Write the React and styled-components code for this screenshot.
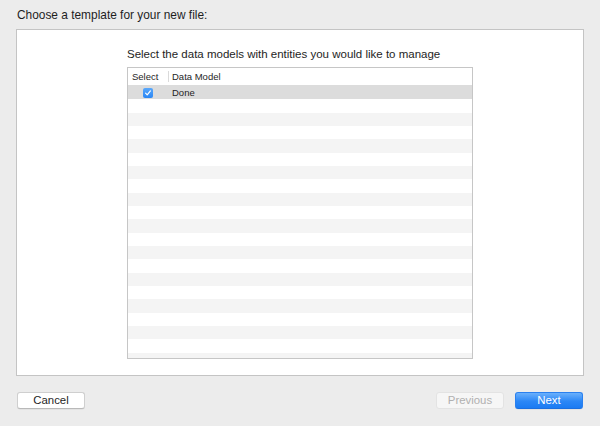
import React from "react";
import styled, { createGlobalStyle } from "styled-components";

const GlobalStyle = createGlobalStyle`
  html, body {
    margin: 0;
    padding: 0;
    background: #ececec;
  }
  body {
    font-family: "Liberation Sans", Arial, sans-serif;
    font-size: 11.6px;
    color: #222;
  }
`;

const Window = styled.div`
  width: 600px;
  height: 426px;
  box-sizing: border-box;
  display: flex;
  flex-direction: column;
  background: #ececec;
`;

const Heading = styled.div`
  height: 29px;
  padding: 8px 0 0 17px;
  box-sizing: border-box;
  font-size: 11.9px;
  line-height: 14px;
  color: #1e1e1e;
`;

const Panel = styled.div`
  margin: 0 16px;
  height: 347px;
  box-sizing: border-box;
  background: #fff;
  border: 1px solid #c4c4c4;
  display: flex;
  justify-content: center;
`;

const Chooser = styled.div`
  width: 346px;
  display: flex;
  flex-direction: column;
  padding-top: 17px;
`;

const Prompt = styled.div`
  font-size: 11.5px;
  line-height: 14px;
  margin-bottom: 6px;
  color: #1e1e1e;
`;

const Table = styled.div`
  height: 292px;
  box-sizing: border-box;
  border: 1px solid #c6c6c6;
  background: #fff;
  overflow: hidden;
  font-size: 9.5px;
`;

const HeaderRow = styled.div`
  display: flex;
  height: 18px;
  box-sizing: border-box;
  border-bottom: 1px solid #dcdcdc;
  line-height: 17px;
`;

const HeaderCell = styled.div`
  width: ${(p) => p.$width || "auto"};
  flex: ${(p) => (p.$width ? "none" : "1")};
  padding-left: ${(p) => (p.$divider ? "4px" : "4px")};
  box-sizing: border-box;
  color: #262626;
  position: relative;
  ${(p) =>
    p.$divider &&
    `
    &::before {
      content: "";
      position: absolute;
      left: 0;
      top: 3px;
      bottom: 3px;
      border-left: 1px solid #dadada;
    }
  `}
`;

const Row = styled.div`
  display: flex;
  align-items: center;
  height: 13.33px;
  background: ${(p) => (p.$selected ? "#dcdcdc" : p.$striped ? "#f4f4f4" : "#fff")};
`;

const CheckCell = styled.div`
  width: 40px;
  display: flex;
  justify-content: center;
  align-items: center;
`;

const NameCell = styled.div`
  flex: 1;
  padding-left: 4px;
  line-height: 13px;
  color: #1e1e1e;
`;

const Checkbox = styled.span`
  width: 10px;
  height: 10px;
  border-radius: 2px;
  background: linear-gradient(#5aa8fb, #2a86f4);
  display: flex;
  align-items: center;
  justify-content: center;
  svg {
    display: block;
  }
`;

const Footer = styled.div`
  display: flex;
  align-items: center;
  padding: 16px 17px 0 17px;
`;

const Spacer = styled.div`
  flex: 1;
`;

const Button = styled.button`
  width: 68px;
  height: 17px;
  padding: 0;
  border-radius: 3px;
  font-family: "Liberation Sans", Arial, sans-serif;
  font-size: 11.4px;
  line-height: 15px;
  border: 1px solid #cfcfcf;
  border-bottom-color: #b9b9b9;
  background: #fff;
  color: #1e1e1e;
  box-shadow: 0 0.5px 0.5px rgba(0, 0, 0, 0.08);
  & + & {
    margin-left: 11px;
  }
  ${(p) =>
    p.$disabled &&
    `
    background: #f6f6f6;
    border-color: #e3e3e3;
    color: #b0b0b0;
    box-shadow: none;
  `}
  ${(p) =>
    p.$primary &&
    `
    background: linear-gradient(#6ab0fc, #2b87f6 55%, #1b7bf3);
    border-color: #2a80ef;
    border-bottom-color: #1a6fe0;
    color: #fff;
  `}
`;

const rowCount = 20;

export default function App() {
  const rows = Array.from({ length: rowCount }, (_, i) => i);
  return (
    <Window>
      <GlobalStyle />
      <Heading>Choose a template for your new file:</Heading>
      <Panel>
        <Chooser>
          <Prompt>Select the data models with entities you would like to manage</Prompt>
          <Table>
            <HeaderRow>
              <HeaderCell $width="40px">Select</HeaderCell>
              <HeaderCell $divider>Data Model</HeaderCell>
            </HeaderRow>
            <Row $selected>
              <CheckCell>
                <Checkbox>
                  <svg width="8" height="8" viewBox="0 0 8 8">
                    <path
                      d="M1.6 4.2 L3.2 5.8 L6.4 1.9"
                      fill="none"
                      stroke="#fff"
                      strokeWidth="1.2"
                      strokeLinecap="round"
                      strokeLinejoin="round"
                    />
                  </svg>
                </Checkbox>
              </CheckCell>
              <NameCell>Done</NameCell>
            </Row>
            {rows.map((i) => (
              <Row key={i} $striped={i % 2 === 1} />
            ))}
          </Table>
        </Chooser>
      </Panel>
      <Footer>
        <Button>Cancel</Button>
        <Spacer />
        <Button $disabled>Previous</Button>
        <Button $primary>Next</Button>
      </Footer>
    </Window>
  );
}
